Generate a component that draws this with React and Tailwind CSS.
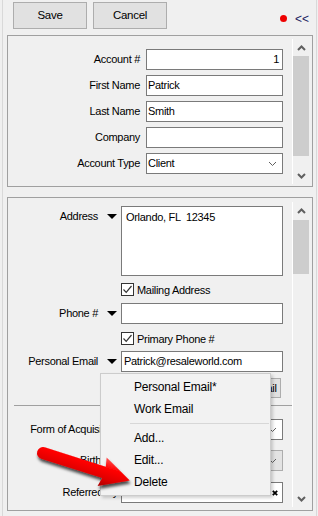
import React from 'react';

const Chevron = ({ up }) => (
    <svg width="9" height="6" viewBox="0 0 9 6">
        <path d={up ? 'M1 5 L4.5 1.5 L8 5' : 'M1 1 L4.5 4.5 L8 1'} fill="none" stroke="#606060" strokeWidth="2" />
    </svg>
);

const ComboArrow = () => (
    <svg width="9" height="6" viewBox="0 0 9 6">
        <path d="M1 1 L4.5 4.5 L8 1" fill="none" stroke="#606060" strokeWidth="1" />
    </svg>
);

const Triangle = () => (
    <svg width="10" height="5" viewBox="0 0 10 5">
        <path d="M0 0 L10 0 L5 5 Z" fill="#000" />
    </svg>
);

const ScrollBar = ({ className, thumb }) => (
    <div className={`w-[17px] border-l border-white flex flex-col ${className}`}>
        <div className="h-[17px] flex items-center justify-center"><Chevron up /></div>
        <div className="flex-1">
            <div className={thumb}></div>
        </div>
        <div className="h-[17px] flex items-center justify-center"><Chevron /></div>
    </div>
);

const CheckBox = ({ label }) => (
    <div className="flex items-center ml-[113px] h-[13px]">
        <div className="w-[13px] h-[13px] border border-[#333333] bg-white flex items-center justify-center">
            <svg width="11" height="11" viewBox="0 0 11 11">
                <path d="M1.5 5.5 L4.2 8.3 L9.5 2" fill="none" stroke="#333333" strokeWidth="1.2" />
            </svg>
        </div>
        <span className="ml-[3px] leading-[14px]">{label}</span>
    </div>
);

const FormRow = ({ label, children }) => (
    <div className="flex items-center h-[21px]">
        <div className="w-[138px] pr-[6px] text-right">{label}</div>
        {children}
    </div>
);

const menuItems = ['Personal Email*', 'Work Email'];
const menuActions = ['Add...', 'Edit...', 'Delete'];

export default function App() {
    return (
        <div className="relative w-[318px] h-[516px] overflow-hidden bg-[#f0f0f0] text-black text-[11px] tracking-[-0.3px] font-['Liberation_Sans',Arial,sans-serif]">
            <div className="ml-[2px] w-[315px] h-full border-x border-[#d9d9d9]">

                {/* toolbar */}
                <div className="flex pt-[2px]">
                    <button className="ml-[10px] w-[74px] h-[27px] border border-[#adadad] bg-[#e1e1e1] text-[11.5px]">Save</button>
                    <button className="ml-[6px] w-[74px] h-[27px] border border-[#adadad] bg-[#e1e1e1] text-[11.5px]">Cancel</button>
                    <div className="ml-auto flex items-center h-[27px] pt-[6px]">
                        <div className="w-[7px] h-[7px] rounded-full bg-[#ee0000]"></div>
                        <span className="ml-[8px] mr-[7px] text-[12px] tracking-normal text-[#202060]">&lt;&lt;</span>
                    </div>
                </div>

                {/* account panel */}
                <div className="mt-[6px] ml-[4px] w-[306px] h-[152px] border border-[#a0a0a0] flex">
                    <div className="flex-1 pt-[13px] flex flex-col gap-[5px]">
                        <FormRow label="Account #">
                            <div className="w-[137px] h-[21px] border border-[#7a7a7a] bg-white flex items-center justify-end pr-[3px]">1</div>
                        </FormRow>
                        <FormRow label="First Name">
                            <div className="w-[137px] h-[21px] border border-[#7a7a7a] bg-white flex items-center pl-[1px]">Patrick</div>
                        </FormRow>
                        <FormRow label="Last Name">
                            <div className="w-[137px] h-[21px] border border-[#7a7a7a] bg-white flex items-center pl-[1px]">Smith</div>
                        </FormRow>
                        <FormRow label="Company">
                            <div className="w-[137px] h-[21px] border border-[#7a7a7a] bg-white"></div>
                        </FormRow>
                        <FormRow label="Account Type">
                            <div className="w-[137px] h-[21px] border border-[#7a7a7a] bg-white flex items-center pl-[1px] pr-[5px]">
                                <span className="flex-1">Client</span>
                                <ComboArrow />
                            </div>
                        </FormRow>
                    </div>
                    <ScrollBar className="mt-[3px] mb-[2px] mr-[3px]" thumb="h-[100px] bg-[#cdcdcd]" />
                </div>

                {/* contact panel */}
                <div className="mt-[10px] ml-[4px] w-[306px] h-[314px] border border-[#a0a0a0] flex">
                    <div className="flex-1 pt-[8px] flex flex-col">
                        <div className="flex items-start">
                            <div className="w-[90px] text-right pt-[3px] leading-[14px]">Address</div>
                            <div className="w-[23px] pl-[9px] pt-[8px] flex"><Triangle /></div>
                            <div className="w-[162px] h-[70px] border border-[#7a7a7a] bg-white pl-[4px] pt-[3px] leading-[14px] whitespace-pre">Orlando, FL  12345</div>
                        </div>

                        <div className="mt-[7px]"><CheckBox label="Mailing Address" /></div>

                        <div className="mt-[7px] flex items-center h-[21px]">
                            <div className="w-[90px] text-right">Phone #</div>
                            <div className="w-[23px] pl-[9px] flex"><Triangle /></div>
                            <div className="w-[162px] h-[21px] border border-[#7a7a7a] bg-white"></div>
                        </div>

                        <div className="mt-[8px]"><CheckBox label="Primary Phone #" /></div>

                        <div className="mt-[6px] flex items-center h-[21px]">
                            <div className="w-[90px] text-right whitespace-nowrap">Personal Email</div>
                            <div className="w-[23px] pl-[9px] flex"><Triangle /></div>
                            <div className="w-[162px] h-[21px] border border-[#7a7a7a] bg-white flex items-center pl-[2px]">Patrick@resaleworld.com</div>
                        </div>

                        <div className="mt-[6px] flex justify-end pr-[11px]">
                            <button className="w-[62px] h-[20px] border border-[#adadad] bg-[#e1e1e1]">Send Email</button>
                        </div>

                        <div className="mt-[7px] ml-[6px] h-[1px] bg-[#a0a0a0]"></div>

                        <div className="mt-[13px] flex items-center h-[21px]">
                            <div className="w-[110px] text-right whitespace-nowrap">Form of Acquisition</div>
                            <div className="w-[3px]"></div>
                            <div className="w-[162px] h-[21px] border border-[#7a7a7a] bg-white flex items-center justify-end pr-[5px]"><ComboArrow /></div>
                        </div>

                        <div className="mt-[10px] flex items-center h-[21px]">
                            <div className="w-[110px] text-right">Birthday</div>
                            <div className="w-[3px]"></div>
                            <div className="w-[162px] h-[21px] border border-[#adadad] bg-[#e3e3e3] flex items-center justify-end pr-[5px]"><ComboArrow /></div>
                        </div>

                        <div className="mt-[11px] flex items-center h-[21px]">
                            <div className="w-[110px] text-right">Referred By</div>
                            <div className="w-[3px]"></div>
                            <div className="w-[162px] h-[21px] border border-[#7a7a7a] bg-white flex items-center justify-end pr-[4px]">
                                <svg width="6" height="6" viewBox="0 0 6 6">
                                    <path d="M0.8 0.8 L5.2 5.2 M5.2 0.8 L0.8 5.2" stroke="#000" strokeWidth="1.8" />
                                </svg>
                            </div>
                        </div>
                    </div>
                    <ScrollBar className="mt-[4px] mb-[3px] mr-[3px]" thumb="mt-[1px] h-[54px] bg-[#cdcdcd]" />
                </div>
            </div>

            {/* email context menu */}
            <div className="absolute left-[100px] top-[373px] w-[171px] h-[123px] border border-[#cccccc] bg-[#f2f2f2] shadow-[2px_2px_3px_rgba(0,0,0,0.18)] pt-[2px] text-[12px] tracking-[-0.2px]">
                {menuItems.map((item) => (
                    <div key={item} className="h-[22px] flex items-center pl-[33px]">{item}</div>
                ))}
                <div className="h-[7px] flex items-center">
                    <div className="ml-[29px] mr-[1px] flex-1 h-[1px] bg-[#d7d7d7]"></div>
                </div>
                {menuActions.map((item) => (
                    <div key={item} className="h-[22px] flex items-center pl-[33px]">{item}</div>
                ))}
            </div>

            {/* red pointer arrow */}
            <svg className="absolute left-[28px] top-[432px] pointer-events-none" width="115" height="72" viewBox="28 432 115 72">
                <defs>
                    <linearGradient id="arrowFill" gradientUnits="userSpaceOnUse" x1="0" y1="-15" x2="0" y2="15">
                        <stop offset="0" stopColor="#ff5050" />
                        <stop offset="0.35" stopColor="#ff0000" />
                        <stop offset="0.7" stopColor="#e00000" />
                        <stop offset="1" stopColor="#a80000" />
                    </linearGradient>
                    <filter id="arrowShadow" x="-30%" y="-60%" width="160%" height="220%">
                        <feDropShadow dx="1" dy="3" stdDeviation="1.8" floodColor="#000" floodOpacity="0.7" />
                    </filter>
                </defs>
                <g filter="url(#arrowShadow)">
                    <g transform="translate(43 453) rotate(17.6)">
                        <path d="M0 -6 L64 -6 L62 -15 L91 0 L62 15 L64 6 L0 6 A6 6 0 0 1 0 -6 Z" fill="url(#arrowFill)" />
                    </g>
                </g>
            </svg>
        </div>
    );
}
